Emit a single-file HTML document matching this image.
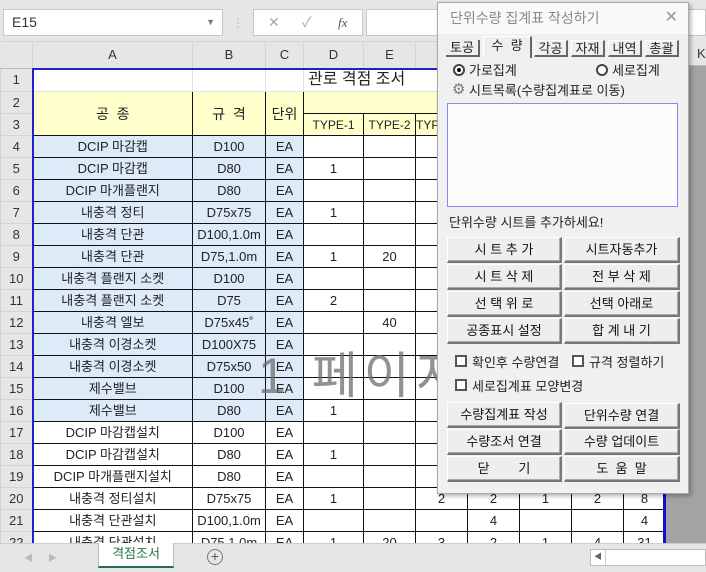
<!DOCTYPE html>
<html><head><meta charset="utf-8">
<style>
*{margin:0;padding:0;box-sizing:border-box}
body{width:706px;height:572px;overflow:hidden;background:#e6e6e6;font-family:"Liberation Sans","Noto Sans CJK KR",sans-serif;position:relative;font-size:13px;color:#222}
.abs{position:absolute}
table.g{position:absolute;left:0;top:41px;border-collapse:collapse;table-layout:fixed}
table.g td{height:22px;line-height:18px;text-align:center;vertical-align:middle;border:1px solid #111;font-size:13px;white-space:nowrap;overflow:hidden;padding:0}
table.g tr.h td{height:27px;background:#e6e6e6;border:1px solid #d4d4d4;border-bottom:1px solid #bbb;color:#333;font-size:13px}
table.g td.rh{background:#e6e6e6;border:1px solid #d4d4d4;border-right:1px solid #bbb;color:#333}
.bl{background:#ddeaf7}
.y{background:#ffffcc}
.w{background:#fff}
table.g tr.r1 td{border:1px solid #e0e0e0;background:#fff;height:23px}
table.g tr.r1 td.rh{background:#e6e6e6;border:1px solid #d4d4d4}
.btn{position:absolute;height:26px;background:#eeeeee;border:1px solid #fff;border-right:2px solid #777;border-bottom:2px solid #777;box-shadow:inset -1px -1px 0 #aaa;text-align:center;line-height:23px;font-size:13px;color:#111}
.tab{position:absolute;top:37px;height:17px;font-size:13px;line-height:15px;text-align:center;border-top:1px solid #fff;border-left:1px solid #fff;border-right:2px solid #666;border-bottom:2px solid #666;background:#efefef}
.cb{position:absolute;width:12px;height:12px;border:2px solid #555;background:#fff}
</style></head><body>
<div class="abs" style="left:3px;top:9px;width:220px;height:27px;background:#fff;border:1px solid #c8c8c8;font-size:14px;line-height:25px;padding-left:8px;color:#333">E15<span style="position:absolute;right:7px;top:0;font-size:9px;color:#777">▼</span></div>
<div class="abs" style="left:236px;top:16px;color:#aaa;font-size:12px;line-height:4px">·<br>·<br>·</div>
<div class="abs" style="left:253px;top:9px;width:110px;height:27px;background:#fff;border:1px solid #c8c8c8;color:#aaa;font-size:14px;line-height:25px"><span style="position:absolute;left:14px">✕</span><span style="position:absolute;left:48px">✓</span><span style="position:absolute;left:84px;color:#555;font-style:italic;font-family:'Liberation Serif',serif;font-size:13px">fx</span></div>
<div class="abs" style="left:366px;top:9px;width:340px;height:27px;background:#fff;border:1px solid #c8c8c8"></div>
<div class="abs" style="left:15px;top:47px;width:0;height:0;border-left:16px solid transparent;border-bottom:16px solid #b8b8b8"></div>

<table class="g">
<colgroup><col style="width:32px"><col style="width:160px"><col style="width:73px"><col style="width:38px"><col style="width:60px"><col style="width:52px"><col style="width:52px"><col style="width:52px"><col style="width:52px"><col style="width:52px"><col style="width:42px"></colgroup>
<tr class="h"><td style="border-left:0"></td><td>A</td><td>B</td><td>C</td><td>D</td><td>E</td><td>F</td><td>G</td><td>H</td><td>I</td><td>J</td></tr>
<tr class="r1"><td class="rh">1</td><td style="border-left:2px solid #2222cc;border-top:2px solid #2222cc"></td><td style="border-top:2px solid #2222cc"></td><td style="border-top:2px solid #2222cc"></td><td colspan="7" style="text-align:left;padding-left:4px;font-size:16px;border-top:2px solid #2222cc">관로 격점 조서</td></tr>
<tr><td class="rh">2</td><td class="y" rowspan="2" style="border-left:2px solid #2222cc;font-size:14px">공 &nbsp;종</td><td class="y" rowspan="2" style="font-size:14px">규 &nbsp;격</td><td class="y" rowspan="2" style="font-size:14px">단위</td><td class="y" colspan="7"></td></tr>
<tr><td class="rh">3</td><td class="y" style="font-size:12px">TYPE-1</td><td class="y" style="font-size:12px">TYPE-2</td><td class="y" style="font-size:12px;text-align:left">TYPE-3</td><td class="y"></td><td class="y"></td><td class="y"></td><td class="y"></td></tr>
<tr><td class="rh">4</td><td class="bl" style="border-left:2px solid #2222cc">DCIP 마감캡</td><td class="bl">D100</td><td class="bl">EA</td><td class="w"></td><td class="w"></td><td class="w"></td><td class="w"></td><td class="w"></td><td class="w"></td><td class="w"></td></tr>
<tr><td class="rh">5</td><td class="bl" style="border-left:2px solid #2222cc">DCIP 마감캡</td><td class="bl">D80</td><td class="bl">EA</td><td class="w">1</td><td class="w"></td><td class="w"></td><td class="w"></td><td class="w"></td><td class="w"></td><td class="w"></td></tr>
<tr><td class="rh">6</td><td class="bl" style="border-left:2px solid #2222cc">DCIP 마개플랜지</td><td class="bl">D80</td><td class="bl">EA</td><td class="w"></td><td class="w"></td><td class="w"></td><td class="w"></td><td class="w"></td><td class="w"></td><td class="w"></td></tr>
<tr><td class="rh">7</td><td class="bl" style="border-left:2px solid #2222cc">내충격 정티</td><td class="bl">D75x75</td><td class="bl">EA</td><td class="w">1</td><td class="w"></td><td class="w"></td><td class="w"></td><td class="w"></td><td class="w"></td><td class="w"></td></tr>
<tr><td class="rh">8</td><td class="bl" style="border-left:2px solid #2222cc">내충격 단관</td><td class="bl">D100,1.0m</td><td class="bl">EA</td><td class="w"></td><td class="w"></td><td class="w"></td><td class="w"></td><td class="w"></td><td class="w"></td><td class="w"></td></tr>
<tr><td class="rh">9</td><td class="bl" style="border-left:2px solid #2222cc">내충격 단관</td><td class="bl">D75,1.0m</td><td class="bl">EA</td><td class="w">1</td><td class="w">20</td><td class="w"></td><td class="w"></td><td class="w"></td><td class="w"></td><td class="w"></td></tr>
<tr><td class="rh">10</td><td class="bl" style="border-left:2px solid #2222cc">내충격 플랜지 소켓</td><td class="bl">D100</td><td class="bl">EA</td><td class="w"></td><td class="w"></td><td class="w"></td><td class="w"></td><td class="w"></td><td class="w"></td><td class="w"></td></tr>
<tr><td class="rh">11</td><td class="bl" style="border-left:2px solid #2222cc">내충격 플랜지 소켓</td><td class="bl">D75</td><td class="bl">EA</td><td class="w">2</td><td class="w"></td><td class="w"></td><td class="w"></td><td class="w"></td><td class="w"></td><td class="w"></td></tr>
<tr><td class="rh">12</td><td class="bl" style="border-left:2px solid #2222cc">내충격 엘보</td><td class="bl">D75x45˚</td><td class="bl">EA</td><td class="w"></td><td class="w">40</td><td class="w"></td><td class="w"></td><td class="w"></td><td class="w"></td><td class="w"></td></tr>
<tr><td class="rh">13</td><td class="bl" style="border-left:2px solid #2222cc">내충격 이경소켓</td><td class="bl">D100X75</td><td class="bl">EA</td><td class="w"></td><td class="w"></td><td class="w"></td><td class="w"></td><td class="w"></td><td class="w"></td><td class="w"></td></tr>
<tr><td class="rh">14</td><td class="bl" style="border-left:2px solid #2222cc">내충격 이경소켓</td><td class="bl">D75x50</td><td class="bl">EA</td><td class="w"></td><td class="w"></td><td class="w"></td><td class="w"></td><td class="w"></td><td class="w"></td><td class="w"></td></tr>
<tr><td class="rh">15</td><td class="bl" style="border-left:2px solid #2222cc">제수밸브</td><td class="bl">D100</td><td class="bl">EA</td><td class="w"></td><td class="w"></td><td class="w"></td><td class="w"></td><td class="w"></td><td class="w"></td><td class="w"></td></tr>
<tr><td class="rh">16</td><td class="bl" style="border-left:2px solid #2222cc">제수밸브</td><td class="bl">D80</td><td class="bl">EA</td><td class="w">1</td><td class="w"></td><td class="w"></td><td class="w"></td><td class="w"></td><td class="w"></td><td class="w"></td></tr>
<tr><td class="rh">17</td><td class="w" style="border-left:2px solid #2222cc">DCIP 마감캡설치</td><td class="w">D100</td><td class="w">EA</td><td class="w"></td><td class="w"></td><td class="w"></td><td class="w"></td><td class="w"></td><td class="w"></td><td class="w"></td></tr>
<tr><td class="rh">18</td><td class="w" style="border-left:2px solid #2222cc">DCIP 마감캡설치</td><td class="w">D80</td><td class="w">EA</td><td class="w">1</td><td class="w"></td><td class="w"></td><td class="w"></td><td class="w"></td><td class="w"></td><td class="w"></td></tr>
<tr><td class="rh">19</td><td class="w" style="border-left:2px solid #2222cc">DCIP 마개플랜지설치</td><td class="w">D80</td><td class="w">EA</td><td class="w"></td><td class="w"></td><td class="w"></td><td class="w"></td><td class="w"></td><td class="w"></td><td class="w"></td></tr>
<tr><td class="rh">20</td><td class="w" style="border-left:2px solid #2222cc">내충격 정티설치</td><td class="w">D75x75</td><td class="w">EA</td><td class="w">1</td><td class="w"></td><td class="w">2</td><td class="w">2</td><td class="w">1</td><td class="w">2</td><td class="w">8</td></tr>
<tr><td class="rh">21</td><td class="w" style="border-left:2px solid #2222cc">내충격 단관설치</td><td class="w">D100,1.0m</td><td class="w">EA</td><td class="w"></td><td class="w"></td><td class="w"></td><td class="w">4</td><td class="w"></td><td class="w"></td><td class="w">4</td></tr>
<tr><td class="rh">22</td><td class="w" style="border-left:2px solid #2222cc">내충격 단관설치</td><td class="w">D75,1.0m</td><td class="w">EA</td><td class="w">1</td><td class="w">20</td><td class="w">3</td><td class="w">2</td><td class="w">1</td><td class="w">4</td><td class="w">31</td></tr>
</table>
<div class="abs" style="left:663px;top:68px;width:3px;height:475px;background:#1111cc"></div>
<div class="abs" style="left:666px;top:66px;width:40px;height:477px;background:#a3a3a3"></div>
<div class="abs" style="left:666px;top:41px;width:40px;height:25px;background:#e6e6e6;border-bottom:1px solid #bbb;font-size:13px;line-height:25px;padding-left:31px;color:#333">K</div>
<div class="abs" style="left:258px;top:346px;font-size:50px;color:rgba(110,110,110,0.75);letter-spacing:6px;line-height:60px">1 페이지</div>
<div class="abs" style="left:0;top:543px;width:706px;height:29px;background:#e6e6e6;border-top:1px solid #ccc"></div>
<div class="abs" style="left:24px;top:551px;font-size:9px;color:#bbb">◀ &nbsp;&nbsp;&nbsp;&nbsp;&nbsp;▶</div>
<div class="abs" style="left:98px;top:543px;width:76px;height:25px;background:#fff;border:1px solid #bbb;border-top:0;border-bottom:2px solid #217346;color:#217346;text-align:center;font-size:13px;line-height:22px">격점조서</div>
<div class="abs" style="left:207px;top:549px;width:16px;height:16px;border:1px solid #777;border-radius:50%;text-align:center;line-height:13px;font-size:14px;color:#555">+</div>
<div class="abs" style="left:590px;top:549px;width:116px;height:17px;background:#fff;border:1px solid #bbb"><span style="position:absolute;left:3px;top:1px;font-size:8px;color:#666">◀</span><span style="position:absolute;left:14px;top:0;width:1px;height:15px;background:#ccc"></span></div>

<div class="abs" style="left:437px;top:2px;width:252px;height:492px;background:#f0f0f0;border:1px solid #aaa;box-shadow:2px 2px 4px rgba(0,0,0,0.3)">
 <div class="abs" style="left:0;top:0;width:250px;height:31px;background:#f9f9f9;font-size:14px;color:#8a8a8a;line-height:30px;padding-left:12px">단위수량 집계표 작성하기<span style="position:absolute;right:10px;top:0;color:#999;font-size:16px">✕</span></div>
 <div class="tab" style="left:8px;width:34px;border-top:0;border-left:0">토공</div>
 <div class="tab" style="left:45px;width:49px;top:33px;height:22px;border-bottom:0;line-height:18px">수 &nbsp;량</div>
 <div class="tab" style="left:96px;width:34px">각공</div>
 <div class="tab" style="left:133px;width:34px">자재</div>
 <div class="tab" style="left:170px;width:34px">내역</div>
 <div class="tab" style="left:207px;width:34px">총괄</div>
 <div class="abs" style="left:15px;top:61px;width:12px;height:12px;border:2px solid #444;border-radius:50%;background:#fff"><div style="margin:2px;width:4px;height:4px;border-radius:50%;background:#000"></div></div>
 <div class="abs" style="left:31px;top:57px;font-size:13px">가로집계</div>
 <div class="abs" style="left:158px;top:61px;width:12px;height:12px;border:2px solid #444;border-radius:50%;background:#fff"></div>
 <div class="abs" style="left:174px;top:57px;font-size:13px">세로집계</div>
 <div class="abs" style="left:14px;top:78px;font-size:15px;color:#777;line-height:18px">⚙</div>
 <div class="abs" style="left:31px;top:77px;font-size:13px">시트목록(수량집계표로 이동)</div>
 <div class="abs" style="left:9px;top:100px;width:231px;height:104px;background:#fcfcfc;border:1px solid #8888ff"></div>
 <div class="abs" style="left:11px;top:209px;font-size:13px">단위수량 시트를 추가하세요!</div>
 <div class="btn" style="left:9px;top:234px;width:115px">시 트 추 가</div>
 <div class="btn" style="left:126px;top:234px;width:116px">시트자동추가</div>
 <div class="btn" style="left:9px;top:261px;width:115px">시 트 삭 제</div>
 <div class="btn" style="left:126px;top:261px;width:116px">전 부 삭 제</div>
 <div class="btn" style="left:9px;top:288px;width:115px">선 택 위 로</div>
 <div class="btn" style="left:126px;top:288px;width:116px">선택 아래로</div>
 <div class="btn" style="left:9px;top:315px;width:115px">공종표시 설정</div>
 <div class="btn" style="left:126px;top:315px;width:116px">합 계 내 기</div>
 <div class="cb" style="left:17px;top:352px"></div>
 <div class="abs" style="left:34px;top:349px;font-size:13px">확인후 수량연결</div>
 <div class="cb" style="left:134px;top:352px"></div>
 <div class="abs" style="left:151px;top:349px;font-size:13px">규격 정렬하기</div>
 <div class="cb" style="left:17px;top:376px"></div>
 <div class="abs" style="left:34px;top:373px;font-size:13px">세로집계표 모양변경</div>
 <div class="btn" style="left:9px;top:399px;width:115px">수량집계표 작성</div>
 <div class="btn" style="left:126px;top:400px;width:116px">단위수량 연결</div>
 <div class="btn" style="left:9px;top:426px;width:115px">수량조서 연결</div>
 <div class="btn" style="left:126px;top:426px;width:116px">수량 업데이트</div>
 <div class="btn" style="left:9px;top:453px;width:115px">닫 &nbsp;&nbsp;&nbsp;&nbsp;&nbsp;&nbsp;&nbsp;기</div>
 <div class="btn" style="left:126px;top:453px;width:116px">도 &nbsp;움 &nbsp;말</div>
</div>
</body></html>
